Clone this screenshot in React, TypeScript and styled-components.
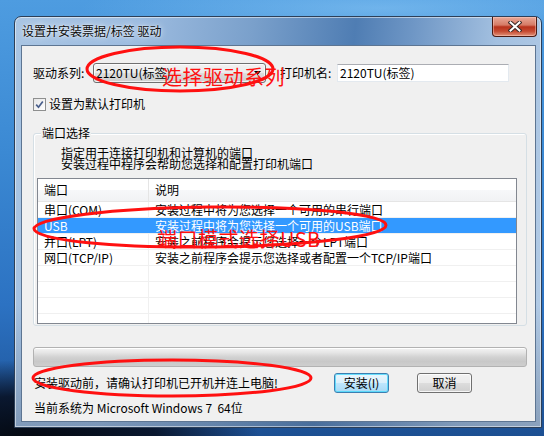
import React from 'react';
import styled, { createGlobalStyle } from 'styled-components';

const GlobalStyle = createGlobalStyle`
  html, body {
    margin: 0;
    padding: 0;
  }
  body {
    width: 544px;
    height: 436px;
    overflow: hidden;
    font-family: "Noto Sans CJK SC", "Liberation Sans", sans-serif;
    font-size: 12px;
  }
`;

const Desktop = styled.div`
  position: relative;
  width: 544px;
  height: 436px;
  box-sizing: border-box;
  overflow: hidden;
  padding: 16px 0 0 14px;
  background:
    radial-gradient(ellipse 230px 80px at 30px 440px, #04080f 0%, #0a1830 55%, rgba(10, 24, 48, 0) 100%),
    radial-gradient(ellipse 300px 30px at 380px 8px, rgba(140, 200, 245, 0.55) 0%, rgba(140, 200, 245, 0) 100%),
    linear-gradient(180deg, #4e9ce0 0%, #3b89d3 35%, #2c72c2 70%, #1c4f92 100%);
`;

const Window = styled.div`
  width: 528px;
  height: 412px;
  box-sizing: border-box;
  border: 1px solid #2c3f58;
  border-radius: 7px 7px 0 0;
  display: flex;
  flex-direction: column;
  background:
    linear-gradient(180deg, rgba(255, 255, 255, 0) 70%, rgba(60, 80, 110, 0.35) 100%),
    linear-gradient(96deg, #a9c5e3 0%, #9dbce0 22%, #7aa0cb 42%, #4f7db3 60%, #6e96c5 70%, #a3c0e0 85%, #b4cce6 100%);
  box-shadow: inset 0 0 0 1px rgba(255, 255, 255, 0.5);
`;

const TitleBar = styled.div`
  height: 28px;
  display: flex;
  align-items: flex-start;
  padding-left: 7px;
`;

const Title = styled.div`
  flex: 1;
  line-height: 28px;
  font-size: 12px;
  color: #0b0b0b;
  text-shadow: 0 0 6px rgba(255, 255, 255, 0.9), 0 0 2px rgba(255, 255, 255, 0.8);
`;

const CloseButton = styled.div`
  width: 45px;
  height: 20px;
  margin-right: 4px;
  box-sizing: border-box;
  border: 1px solid #4b1a12;
  border-top: none;
  border-radius: 0 0 4px 4px;
  display: flex;
  align-items: center;
  justify-content: center;
  background: linear-gradient(180deg, #e8a999 0%, #d67b66 42%, #b8321c 52%, #c54a31 75%, #e2937a 100%);
  box-shadow: inset 0 0 0 1px rgba(255, 210, 200, 0.45);

  svg {
    width: 14px;
    height: 11px;
  }
`;

const Client = styled.div`
  flex: 1;
  margin: 0 5px 5px 6px;
  border: 1px solid #5d7592;
  background: #f0f0f0;
  padding: 17px 0 0 11px;
  display: flex;
  flex-direction: column;
  color: #000;
`;

const FieldRow = styled.div`
  display: flex;
  align-items: center;
  height: 20px;
`;

const FieldLabel = styled.div<{ $width: number; $gap?: number }>`
  width: ${p => p.$width}px;
  margin-left: ${p => p.$gap ?? 0}px;
  line-height: 14px;
  white-space: nowrap;
`;

const Combo = styled.div`
  position: relative;
  width: 173px;
  height: 20px;
  box-sizing: border-box;
  border: 1px solid #707070;
  border-radius: 3px;
  padding-left: 2px;
  line-height: 18px;
  background: linear-gradient(180deg, #f2f2f2 0%, #ebebeb 50%, #dddddd 51%, #cfcfcf 100%);
  box-shadow: inset 0 0 0 1px rgba(255, 255, 255, 0.7);
  display: flex;
  align-items: center;
  justify-content: space-between;

  svg {
    width: 7px;
    height: 4px;
    margin-right: 4px;
  }
`;

const TextInput = styled.div`
  width: 172px;
  height: 18px;
  box-sizing: border-box;
  border: 1px solid #e3e9ef;
  border-top-color: #abadb3;
  background: #fff;
  padding-left: 2px;
  line-height: 16px;
`;

const CheckRow = styled.div`
  margin-top: 14px;
  height: 14px;
  display: flex;
  align-items: center;
  gap: 3px;
  line-height: 14px;
`;

const CheckBox = styled.div`
  width: 13px;
  height: 13px;
  box-sizing: border-box;
  border: 1px solid #8e8f8f;
  background: linear-gradient(135deg, #e6e6e6 0%, #ffffff 100%);
  display: flex;
  align-items: center;
  justify-content: center;

  svg {
    width: 11px;
    height: 11px;
  }
`;

const GroupBox = styled.div`
  margin-top: 22px;
  width: 494px;
  box-sizing: border-box;
  border: 1px solid #d5dfe5;
  border-radius: 3px;
  box-shadow: inset 1px 1px 0 #ffffff;
  padding-bottom: 1px;
  display: flex;
  flex-direction: column;
  align-items: flex-start;
`;

const Legend = styled.div`
  margin: -7px 0 0 7px;
  padding: 0 1px;
  line-height: 12px;
  height: 12px;
  background: #f0f0f0;
`;

const Description = styled.div`
  margin: 8px 0 0 27px;
  line-height: 11px;
`;

const ListView = styled.div`
  margin: 9px 0 0 3px;
  width: 480px;
  height: 146px;
  box-sizing: border-box;
  border: 1px solid #828790;
  background: #fff;
  overflow: hidden;
`;

const ListHeader = styled.div`
  display: grid;
  grid-template-columns: 111px 1fr;
  height: 23px;
  box-sizing: border-box;
  border-bottom: 1px solid #e5e5e5;
  background: linear-gradient(180deg, #ffffff 0%, #ffffff 50%, #f7f8fa 51%, #f1f2f4 100%);
  line-height: 22px;
`;

const HeaderCell = styled.div<{ $divider?: boolean }>`
  padding-left: 6px;
  box-sizing: border-box;
  border-right: ${p => (p.$divider ? '1px solid #e5e5e5' : 'none')};
`;

const ListRow = styled.div<{ $selected?: boolean }>`
  display: grid;
  grid-template-columns: 111px 1fr;
  height: 16px;
  box-sizing: border-box;
  border-bottom: 1px solid #f0f0f0;
  line-height: 15px;
  white-space: nowrap;
  background: ${p => (p.$selected ? '#3399ff' : 'transparent')};
  color: ${p => (p.$selected ? '#ffffff' : '#000000')};
`;

const RowCell = styled.div<{ $divider?: boolean; $selected?: boolean }>`
  padding-left: 6px;
  box-sizing: border-box;
  overflow: hidden;
  border-right: ${p => (p.$divider ? `1px solid ${p.$selected ? '#3399ff' : '#f0f0f0'}` : 'none')};
`;

const ProgressBar = styled.div`
  margin-top: 21px;
  width: 494px;
  height: 20px;
  box-sizing: border-box;
  border: 1px solid #b2b2b2;
  border-radius: 3px;
  background: linear-gradient(180deg, #f4f4f4 0%, #e6e6e6 25%, #d2d2d2 50%, #c8c8c8 75%, #cecece 100%);
  box-shadow: inset 0 1px 0 #ffffff;
`;

const ActionRow = styled.div`
  margin-top: 6px;
  height: 20px;
  display: flex;
  align-items: center;
`;

const Notice = styled.div`
  width: 300px;
  padding-left: 1px;
  line-height: 14px;
  white-space: nowrap;
`;

const Button = styled.div<{ $default?: boolean; $gap?: number }>`
  width: 55px;
  height: 20px;
  margin-left: ${p => p.$gap ?? 0}px;
  box-sizing: border-box;
  border: 1px solid ${p => (p.$default ? '#3c7fb1' : '#707070')};
  border-radius: 3px;
  display: flex;
  align-items: center;
  justify-content: center;
  line-height: 14px;
  background: ${p =>
    p.$default
      ? 'linear-gradient(180deg, #eaf6fd 0%, #d9f0fc 50%, #bee6fd 51%, #a7d9f5 100%)'
      : 'linear-gradient(180deg, #f2f2f2 0%, #ebebeb 50%, #dddddd 51%, #cfcfcf 100%)'};
  box-shadow: inset 0 0 0 1px ${p => (p.$default ? 'rgba(72, 216, 251, 0.8)' : 'rgba(255, 255, 255, 0.8)')};
`;

const SystemLine = styled.div`
  margin-top: 9px;
  padding-left: 1px;
  line-height: 12px;
  white-space: pre;
`;

const Overlay = styled.div`
  position: absolute;
  inset: 0;
  pointer-events: none;

  svg {
    position: absolute;
    left: 0;
    top: 0;
  }
`;

const RedNote = styled.div<{ $left: number; $top: number }>`
  position: absolute;
  left: ${p => p.$left}px;
  top: ${p => p.$top}px;
  font-size: 20px;
  line-height: 20px;
  letter-spacing: 0.5px;
  color: #ff1010;
  white-space: nowrap;
`;

const rows = [
  { port: '串口(COM)', desc: '安装过程中将为您选择一个可用的串行端口' },
  { port: 'USB', desc: '安装过程中将为您选择一个可用的USB端口', selected: true },
  { port: '并口(LPT)', desc: '安装之前程序会提示您选择一个LPT端口' },
  { port: '网口(TCP/IP)', desc: '安装之前程序会提示您选择或者配置一个TCP/IP端口' },
  { port: '', desc: '' },
  { port: '', desc: '' },
  { port: '', desc: '' },
  { port: '', desc: '' },
];

export default function App() {
  return (
    <>
      <GlobalStyle />
      <Desktop>
        <Window>
          <TitleBar>
            <Title>设置并安装票据/标签 驱动</Title>
            <CloseButton>
              <svg viewBox="0 0 14 11">
                <path d="M2.5 1.5 L11.5 9.5 M11.5 1.5 L2.5 9.5" stroke="#3a2a28" strokeWidth="4" strokeLinecap="square" />
                <path d="M2.5 1.5 L11.5 9.5 M11.5 1.5 L2.5 9.5" stroke="#ffffff" strokeWidth="2" strokeLinecap="square" />
              </svg>
            </CloseButton>
          </TitleBar>
          <Client>
            <FieldRow>
              <FieldLabel $width={60}>驱动系列:</FieldLabel>
              <Combo>
                <span>2120TU(标签)</span>
                <svg viewBox="0 0 7 4">
                  <polygon points="0,0 7,0 3.5,4" fill="#000" />
                </svg>
              </Combo>
              <FieldLabel $width={57} $gap={14}>打印机名:</FieldLabel>
              <TextInput>2120TU(标签)</TextInput>
            </FieldRow>
            <CheckRow>
              <CheckBox>
                <svg viewBox="0 0 11 11">
                  <path d="M2.2 5.6 L4.5 8.2 L8.8 2.4" stroke="#4a5f8c" strokeWidth="1.7" fill="none" />
                </svg>
              </CheckBox>
              <span>设置为默认打印机</span>
            </CheckRow>
            <GroupBox>
              <Legend>端口选择</Legend>
              <Description>
                指定用于连接打印机和计算机的端口
                <br />
                安装过程中程序会帮助您选择和配置打印机端口
              </Description>
              <ListView>
                <ListHeader>
                  <HeaderCell $divider>端口</HeaderCell>
                  <HeaderCell>说明</HeaderCell>
                </ListHeader>
                {rows.map((r, i) => (
                  <ListRow key={i} $selected={r.selected}>
                    <RowCell $divider $selected={r.selected}>{r.port}</RowCell>
                    <RowCell>{r.desc}</RowCell>
                  </ListRow>
                ))}
              </ListView>
            </GroupBox>
            <ProgressBar />
            <ActionRow>
              <Notice>安装驱动前，请确认打印机已开机并连上电脑!</Notice>
              <Button $default>安装(I)</Button>
              <Button $gap={28}>取消</Button>
            </ActionRow>
            <SystemLine>当前系统为 Microsoft Windows 7  64位</SystemLine>
          </Client>
        </Window>
        <Overlay>
          <svg width="544" height="436" viewBox="0 0 544 436">
            <g fill="none" stroke="#ff1010" strokeWidth="3">
              <ellipse cx="180" cy="69" rx="93" ry="22" />
              <ellipse cx="210" cy="227" rx="176" ry="20" transform="rotate(-0.6 210 227)" />
              <ellipse cx="172" cy="378" rx="139" ry="18" />
            </g>
          </svg>
          <RedNote $left={162} $top={67}>选择驱动系列</RedNote>
          <RedNote $left={157} $top={229}>端口模式选择USB</RedNote>
        </Overlay>
      </Desktop>
    </>
  );
}
